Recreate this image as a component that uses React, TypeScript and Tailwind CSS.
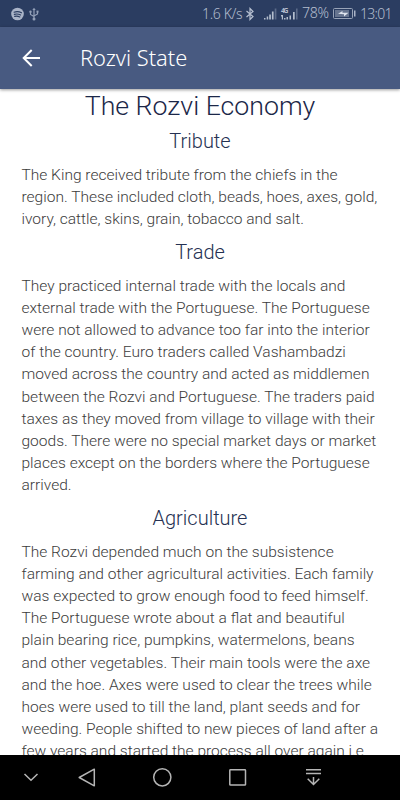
import React from "react";

const sections = [
  {
    title: "Tribute",
    lines: [
      "The King received tribute from the chiefs in the",
      "region. These included cloth, beads, hoes, axes, gold,",
      "ivory, cattle, skins, grain, tobacco and salt.",
    ],
  },
  {
    title: "Trade",
    lines: [
      "They practiced internal trade with the locals and",
      "external trade with the Portuguese. The Portuguese",
      "were not allowed to advance too far into the interior",
      "of the country. Euro traders called Vashambadzi",
      "moved across the country and acted as middlemen",
      "between the Rozvi and Portuguese. The traders paid",
      "taxes as they moved from village to village with their",
      "goods. There were no special market days or market",
      "places except on the borders where the Portuguese",
      "arrived.",
    ],
  },
  {
    title: "Agriculture",
    lines: [
      "The Rozvi depended much on the subsistence",
      "farming and other agricultural activities. Each family",
      "was expected to grow enough food to feed himself.",
      "The Portuguese wrote about a flat and beautiful",
      "plain bearing rice, pumpkins, watermelons, beans",
      "and other vegetables. Their main tools were the axe",
      "and the hoe. Axes were used to clear the trees while",
      "hoes were used to till the land, plant seeds and for",
      "weeding. People shifted to new pieces of land after a",
      "few years and started the process all over again i.e",
    ],
  },
];

function StatusBar() {
  return (
    <div className="flex h-[27px] shrink-0 items-center bg-[#2b3d61] pl-[11px] font-['Noto_Sans',sans-serif] font-light leading-none text-[#b4bdcf]">
      <svg width="13" height="14" viewBox="0 0 13 14" className="shrink-0">
        <circle cx="6.5" cy="7" r="6.3" fill="#aab4c8" />
        <path d="M3 5.2q4-1.3 7.5.6M3.3 7.4q3.300-1 6.300.6M3.600 9.400q2.700-.8 5.200.5" stroke="#2b3d61" strokeWidth="1.1" fill="none" strokeLinecap="round" />
      </svg>
      <svg width="10" height="14" viewBox="0 0 10 14" className="ml-[5px] shrink-0" fill="none" stroke="#93a0b8" strokeWidth="1.200">
        <path d="M5 2v9M1.500 5v2.500L5 9.500M8.500 4.500v2.500L5 9" />
        <path d="M5 .7L3.300 3h3.400z" fill="#93a0b8" stroke="none" />
        <circle cx="5" cy="12" r="1.500" fill="#93a0b8" stroke="none" />
        <circle cx="1.500" cy="4.700" r="1.200" fill="#93a0b8" stroke="none" />
        <path d="M7.500 3.600h2v2h-2z" fill="#93a0b8" stroke="none" />
      </svg>
      <span className="ml-[163px] w-[40px] shrink-0 whitespace-nowrap text-[14px] -tracking-[.35px]">1.6 K/s</span>
      <svg width="10" height="14" viewBox="0 0 10 14" className="ml-[3px] shrink-0" fill="none" stroke="#b7c0d1" strokeWidth="1.200">
        <path d="M1.500 4L8 9.500 5 12.500v-11L8 4.500 1.500 10" />
      </svg>
      <svg width="39" height="15" viewBox="0 0 39 15" className="ml-[8px] shrink-0" fill="#b4bece">
        <path d="M1 12h1.500v1.500H1zM3.700 10.500h1.500v3H3.700zM6.200 8.500h1.700v5H6.200zM8.900 5.500h1.700v8H8.900z" />
        <path d="M11.700 2.500h1.700v11h-1.700z" fill="#5b6b89" />
        <text x="18" y="6.700" fontFamily="Noto Sans" fontSize="6.800" fontWeight="700" textLength="7.500">4G</text>
        <path d="M18 9h2v4.500h-1.200v-3H18zM21 12h1.500v1.500H21zM23.500 11H25v2.500h-1.500zM26.500 9.500H28v4h-1.500zM30 6h1.700v7.500H30z" />
        <path d="M33 2.500h1.600v11H33z" fill="#5b6b89" />
      </svg>
      <span className="w-[27px] shrink-0 whitespace-nowrap text-[14.200px] -tracking-[.3px]">78%</span>
      <svg width="23" height="11" viewBox="0 0 23 11" className="ml-[4px] shrink-0">
        <rect x=".5" y=".5" width="19" height="10" rx="1" fill="none" stroke="#99a4b8" />
        <rect x="2" y="2" width="14" height="7" fill="#66748f" />
        <path d="M5 5.800L9.500 3v1.700H15.500L11 8.500V6.300z" fill="#dde3ed" />
        <path d="M21 2.500h1.500v6H21z" fill="#aab4c8" />
      </svg>
      <span className="ml-[4px] whitespace-nowrap text-[14px] -tracking-[.75px]">13:01</span>
    </div>
  );
}

function NavigationBar() {
  return (
    <nav className="flex h-[45px] shrink-0 bg-black text-[#b5b5b5]">
      <svg width="400" height="45" viewBox="0 0 400 45" fill="none" stroke="currentColor" strokeWidth="1.500">
        <path d="M24.500 19l6.500 6.200 6.500-6.200" />
        <path d="M94.300 14.200v16.600L79.200 22.500z" strokeLinejoin="round" />
        <circle cx="162.300" cy="22.300" r="8.600" />
        <rect x="229.800" y="14.800" width="15.700" height="15.300" rx=".7" />
        <path d="M306 14.800h15M306 18.600h15M313.500 22v7.500M307.700 23.700l5.800 5.800 5.800-5.800" />
      </svg>
    </nav>
  );
}

export default function App() {
  return (
    <div className="flex h-[800px] w-[400px] flex-col overflow-hidden bg-white">
      <StatusBar />
      <header className="z-10 flex h-[62px] shrink-0 items-center bg-[#485a81] pl-[22px] text-white shadow-[0_1px_3px_rgba(0,0,0,0.4)]">
        <svg width="19" height="18" viewBox="0 0 19 18" fill="none" stroke="white" strokeWidth="2">
          <path d="M18 9H2M9.700 1L1.700 9l8 8" />
        </svg>
        <h1 className="ml-[39px] whitespace-nowrap font-['Noto_Sans',sans-serif] text-[21.800px] font-light leading-[30px]">Rozvi State</h1>
      </header>
      <main className="min-h-0 flex-1 overflow-hidden bg-white px-[21.500px] font-[Roboto,sans-serif] font-light">
        <h2 className="pt-px text-center text-[26.700px] leading-[32px] text-[#1b2748]">The Rozvi Economy</h2>
        {sections.map((section) => (
          <section key={section.title}>
            <h3 className="h-[42px] pt-[6px] text-center text-[20px] leading-[26px] text-[#253152]">{section.title}</h3>
            <p className="mb-[2px] whitespace-nowrap text-[15.540px] leading-[22.200px] text-[#3c3c3c]">
              {section.lines.map((line) => (
                <span key={line} className="block">{line}</span>
              ))}
            </p>
          </section>
        ))}
      </main>
      <NavigationBar />
    </div>
  );
}
